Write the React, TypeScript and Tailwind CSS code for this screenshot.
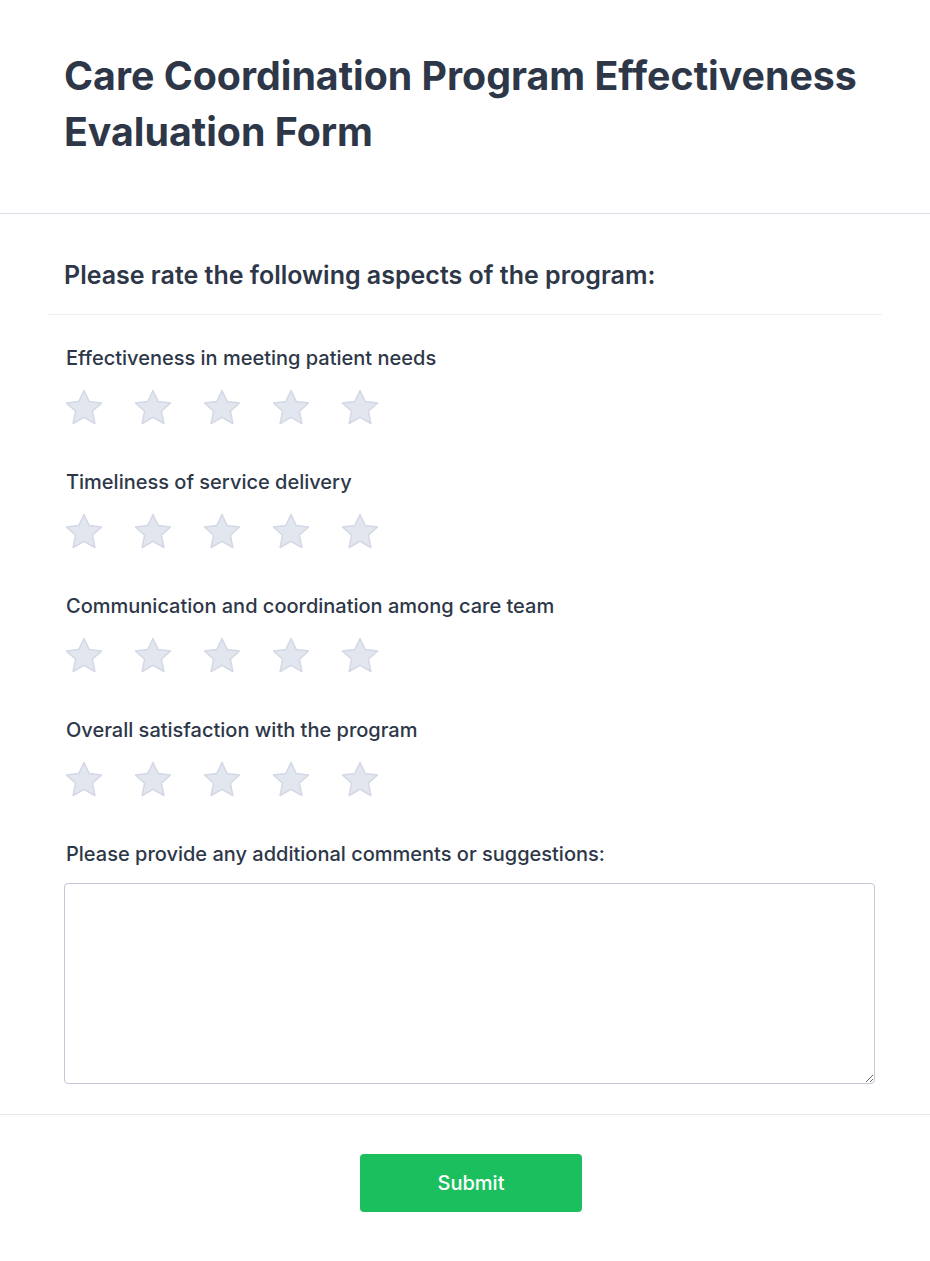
import { useState } from "react"

const aspects = [
  "Effectiveness in meeting patient needs",
  "Timeliness of service delivery",
  "Communication and coordination among care team",
  "Overall satisfaction with the program",
]

function Star({ active }: { active: boolean }) {
  return (
    <svg viewBox="0 0 40 40" className="h-10 w-10">
      <path
        d="M20 2.5 L25.2 13.6 L37.5 15 L28.4 23.3 L30.9 35.5 L20 29.4 L9.1 35.5 L11.6 23.3 L2.5 15 L14.8 13.6 Z"
        fill={active ? "#facc15" : "#e2e6ef"}
        stroke={active ? "#eab308" : "#d3d8e4"}
        strokeWidth="1.5"
        strokeLinejoin="round"
      />
    </svg>
  )
}

export default function App() {
  const [ratings, setRatings] = useState<Record<number, number>>({})
  const [comments, setComments] = useState("")

  return (
    <div className="min-h-screen bg-white text-[#2d3748]" style={{ fontFamily: "Inter, 'Noto Sans', sans-serif" }}>
      {/* Header */}
      <div className="border-b border-[#dcdfe8] px-16 pt-12 pb-[53px]">
        <h1 className="text-[39.3px] font-bold leading-[56px]">Care Coordination Program Effectiveness Evaluation Form</h1>
      </div>

      {/* Ratings */}
      <div className="px-12 pb-[30px]">
        <div className="border-b border-[#edeff3] px-4 pt-[45px] pb-[23px]">
          <h2 className="text-[25px] font-semibold leading-8">Please rate the following aspects of the program:</h2>
        </div>

        <div className="px-4 pt-[29px]">
          {aspects.map((label, i) => (
            <div key={label} className="mb-10">
              <p className="pl-[2px] text-xl font-medium leading-7">{label}</p>
              <div className="mt-4 flex gap-[29px]">
                {[1, 2, 3, 4, 5].map((n) => (
                  <button key={n} onClick={() => setRatings({ ...ratings, [i]: n })} className="h-10 w-10">
                    <Star active={(ratings[i] || 0) >= n} />
                  </button>
                ))}
              </div>
            </div>
          ))}

          <label className="block pl-[2px] text-xl font-medium leading-7">
            Please provide any additional comments or suggestions:
          </label>
          <textarea
            value={comments}
            onChange={(e) => setComments(e.target.value)}
            className="mt-[15px] block h-[201px] w-[811px] rounded border border-[#c4c8d6] p-3 outline-none"
          />
        </div>
      </div>

      {/* Footer */}
      <div className="flex justify-center border-t border-[#e6e8ee] pt-[39px] pb-[50px] pl-3">
        <button className="h-[58px] w-[222px] rounded bg-[#1bbf5e] text-xl font-medium text-white">Submit</button>
      </div>
    </div>
  )
}
